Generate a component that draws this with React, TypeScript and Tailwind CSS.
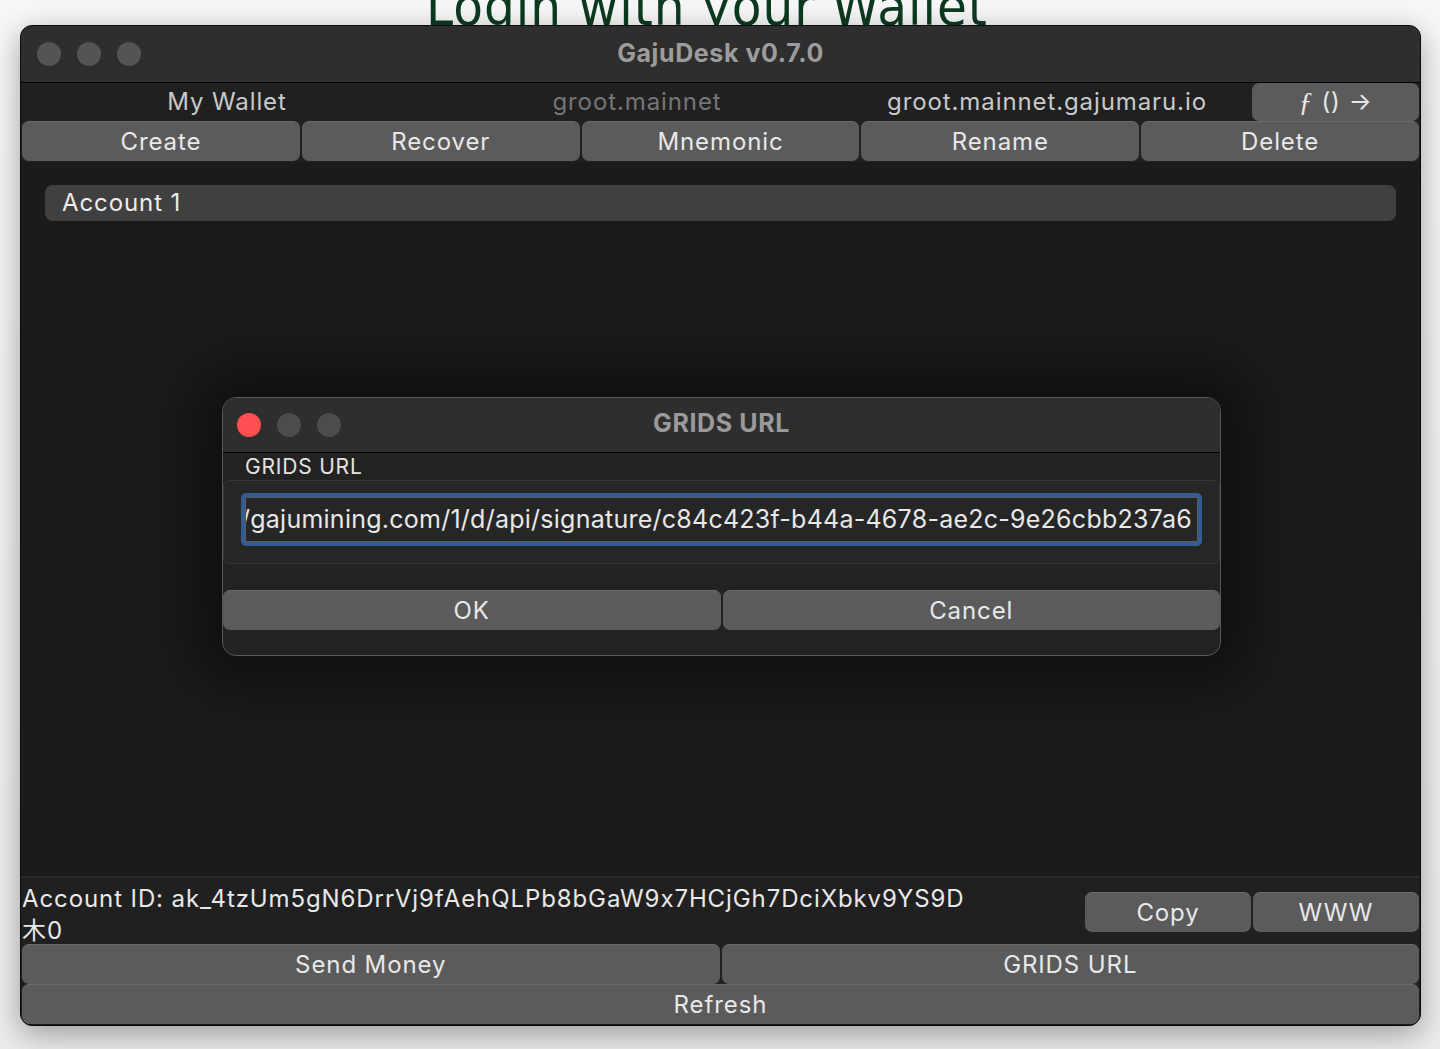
const sans = "font-['Inter','Roboto','Liberation_Sans','Noto_Sans_CJK_JP',sans-serif] [font-feature-settings:'calt'_0,'liga'_0]";

const Btn = ({ label, className = '' }: { label: string; className?: string }) => (
  <button
    className={`h-[40px] rounded-[7px] border-t border-[#6a6a6a] bg-[#5b5b5b] text-[24px] tracking-[0.9px] text-[#e8e8e8] leading-none ${className}`}
  >
    {label}
  </button>
);

const Lights = ({ red = false, color }: { red?: boolean; color: string }) => (
  <div className="flex items-center gap-[16px]">
    <span className={`h-[24px] w-[24px] rounded-full ${red ? 'bg-[#fe4f53]' : color}`} />
    <span className={`h-[24px] w-[24px] rounded-full ${color}`} />
    <span className={`h-[24px] w-[24px] rounded-full ${color}`} />
  </div>
);

const GridsDialog = () => {
  return (
    <div className="absolute left-[201px] top-[371px] w-[999px] h-[259px] rounded-[14px] border border-[#575757] bg-[#222222] shadow-[0_0_60px_30px_rgba(0,0,0,0.45)] overflow-hidden">
      <div className="relative flex h-[55px] items-center border-b border-black bg-[#2e2e2e] px-[14px]">
        <Lights red color="bg-[#4c4c4c]" />
        <div className="absolute inset-0 flex items-center justify-center pb-[2px] text-[25px] font-bold tracking-[0.6px] text-[#9a9a9a]">
          GRIDS URL
        </div>
      </div>
      <div className="h-[27px] pl-[22px] pt-[1px] text-[21px] leading-[26px] tracking-[0.8px] text-[#e4e4e4]">GRIDS URL</div>
      <div className="h-[84px] rounded-[6px] border border-[#363636] bg-[#262626] px-[17px] pt-[12px]">
        <div className="h-[53px] rounded-[5px] bg-[#335d92] p-[4px]">
          <div className="flex h-full items-center justify-end overflow-hidden whitespace-nowrap border border-[#5c5c5c] bg-[#262626] pr-[4px] text-[25px] tracking-[0.25px] text-[#e8e8e8]">
            <span>https://gajumining.com/1/d/api/signature/c84c423f-b44a-4678-ae2c-9e26cbb237a6</span>
            <span className="ml-[1px] h-[30px] w-[3px] bg-[#3a64e6]" />
          </div>
        </div>
      </div>
      <div className="mt-[26px] flex gap-[2px]">
        <Btn label="OK" className="flex-1" />
        <Btn label="Cancel" className="flex-1" />
      </div>
    </div>
  );
};

export default function App() {
  return (
    <div className={`h-[1049px] w-[1440px] overflow-hidden bg-[linear-gradient(to_bottom,#f7f7f7,#ececec)] ${sans}`}>
      <div className="flex h-[25px] items-end justify-center overflow-hidden pr-[26px]">
        <h1 className="mb-[-9px] font-['Liberation_Sans_Narrow','DejaVu_Sans_Condensed',sans-serif] text-[54px] leading-none text-[#0c3a20] tracking-[1px]">
          Login with your Wallet
        </h1>
      </div>

      <div className="relative mx-[20px] h-[1001px] w-[1401px] overflow-hidden rounded-[12px] border border-[#0b0b0b] bg-[#1b1b1b] shadow-[0_8px_30px_rgba(0,0,0,0.35)]">
        {/* title bar */}
        <div className="relative flex h-[57px] items-center border-b border-black bg-[#2e2e2e] px-[16px]">
          <Lights color="bg-[#545454]" />
          <div className="absolute inset-0 flex items-center justify-center text-[25px] font-bold tracking-[0.6px] text-[#9c9c9c]">
            GajuDesk v0.7.0
          </div>
        </div>

        <div className="bg-[#202020] px-[1px]">
          <div className="flex h-[38px] items-center text-[24px] tracking-[0.9px]">
            <div className="flex-1 text-center text-[#c9c9c9]">My Wallet</div>
            <div className="flex-1 text-center text-[#767676]">groot.mainnet</div>
            <div className="flex-1 text-center text-[#c9c9c9]">groot.mainnet.gajumaru.io</div>
            <button className="flex h-[38px] w-[167px] items-center justify-center gap-[8px] rounded-[7px] bg-[#5b5b5b] text-[24px] text-[#e8e8e8]">
              <span className="font-['Liberation_Serif',serif] text-[28px] italic">ƒ</span>
              <span>()</span>
              <span>→</span>
            </button>
          </div>
          <div className="flex gap-[2px] pb-[1px]">
            <Btn label="Create" className="flex-1" />
            <Btn label="Recover" className="flex-1" />
            <Btn label="Mnemonic" className="flex-1" />
            <Btn label="Rename" className="flex-1" />
            <Btn label="Delete" className="flex-1" />
          </div>
        </div>

        {/* account list */}
        <div className="h-[716px] border-b-2 border-[#2a2a2a] bg-[#1b1b1b] px-[24px] pt-[23px]">
          <div className="flex h-[36px] items-center rounded-[8px] bg-[#404040] px-[17px] text-[24px] tracking-[0.9px] text-[#ececec]">
            Account 1
          </div>
        </div>

        {/* details */}
        <div className="bg-[#202020] px-[1px]">
          <div className="flex h-[66px]">
            <div className="flex-1 pt-[5px] text-[24px] leading-[32px] tracking-[0.9px] text-[#e8e8e8]">
              <div>Account ID: ak_4tzUm5gN6DrrVj9fAehQLPb8bGaW9x7HCjGh7DciXbkv9YS9D</div>
              <div>木0</div>
            </div>
            <div className="flex gap-[2px] pt-[14px]">
              <Btn label="Copy" className="w-[166px]" />
              <Btn label="WWW" className="w-[166px]" />
            </div>
          </div>
          <div className="flex gap-[2px]">
            <Btn label="Send Money" className="flex-1" />
            <Btn label="GRIDS URL" className="flex-1" />
          </div>
          <Btn label="Refresh" className="w-full" />
        </div>

        <GridsDialog />
      </div>
    </div>
  );
}
